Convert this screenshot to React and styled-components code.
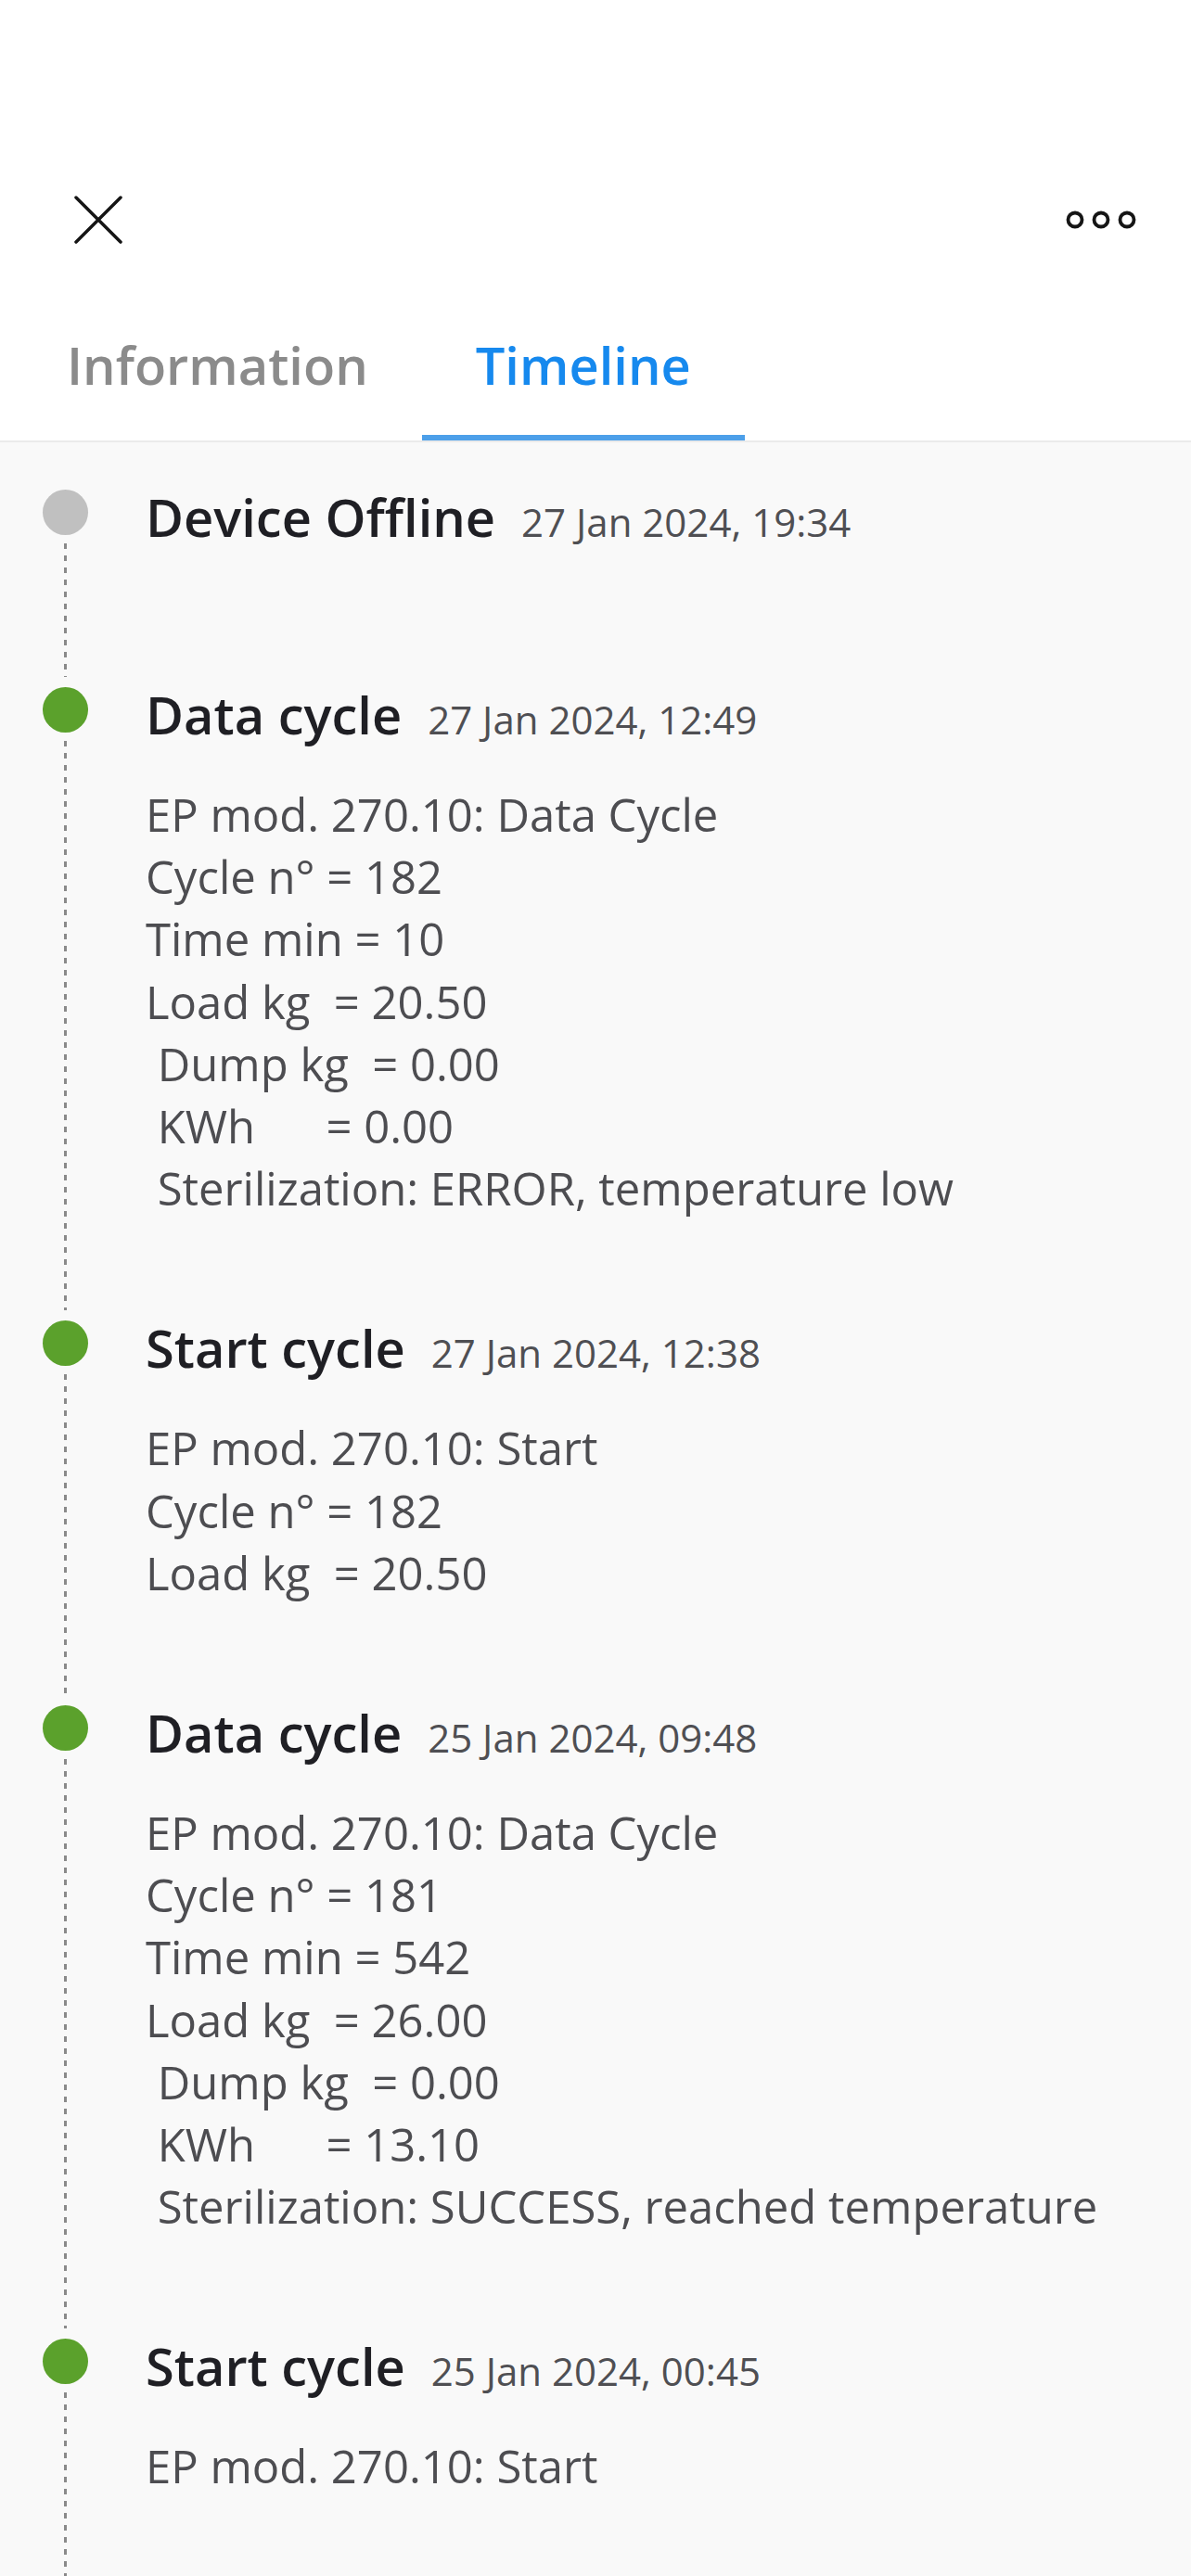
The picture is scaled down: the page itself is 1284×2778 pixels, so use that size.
import styled, { createGlobalStyle } from "styled-components";

const GlobalStyle = createGlobalStyle`
	html, body {
		margin: 0;
		padding: 0;
		background: #f9f9f9;
	}
	body {
		font-family: "Open Sans", "Noto Sans", sans-serif;
	}
`;

const Page = styled.div`
	height: 100vh;
	overflow: hidden;
	background: #f9f9f9;
`;

const Header = styled.header`
	background: #ffffff;
`;

const TopBar = styled.div`
	display: flex;
	justify-content: space-between;
	align-items: center;
	height: 74px;
	padding: 200px 59px 0 80px;
	color: #151515;
`;

const IconButton = styled.button`
	display: flex;
	align-items: center;
	justify-content: center;
	padding: 0;
	border: none;
	background: none;
	color: inherit;
`;

const Tabs = styled.nav`
	display: flex;
	margin-top: 79px;
	padding-left: 14px;
	border-bottom: 2px solid #ebebeb;
`;

const Tab = styled.div`
	padding: 0 58px 36px;
	font-size: 56px;
	line-height: 80px;
	font-weight: 600;
	color: ${(p) => (p.$active ? "#1689ee" : "#8b8b8b")};
	border-bottom: 6px solid ${(p) => (p.$active ? "#4c9fe9" : "transparent")};
`;

const Timeline = styled.section`
	padding: 40px 0 0 46px;
`;

const Item = styled.article`
	display: grid;
	grid-template-columns: 49px 1fr;
	column-gap: 62px;
`;

const Rail = styled.div`
	display: flex;
	flex-direction: column;
	align-items: center;
`;

const Dot = styled.span`
	width: 49px;
	height: 49px;
	margin-top: 11px;
	border-radius: 50%;
	background: ${(p) => p.$color};
	flex-shrink: 0;
`;

const DashLine = styled.span`
	flex: 1;
	width: 3px;
	margin-top: 9px;
	background: repeating-linear-gradient(to bottom, #8a8a8a 0 6px, transparent 6px 13px);
`;

const Content = styled.div`
	padding-bottom: 98px;
`;

const ItemHeader = styled.div`
	display: flex;
	align-items: baseline;
	gap: 28px;
	height: 80px;
	line-height: 80px;
	white-space: nowrap;
`;

const Title = styled.span`
	font-size: 56px;
	font-weight: 600;
	color: #1f1f24;
`;

const Stamp = styled.span`
	font-size: 42px;
	color: #4f4f53;
`;

const Body = styled.div`
	margin-top: 35px;
	font-size: 49px;
	line-height: 67.2px;
	color: #4d4d51;
	white-space: pre;
`;

const events = [
	{ title: "Device Offline", date: "27 Jan 2024, 19:34", color: "#c0c0c0", lines: [] },
	{
		title: "Data cycle",
		date: "27 Jan 2024, 12:49",
		color: "#5ba12c",
		lines: [
			"EP mod. 270.10: Data Cycle",
			"Cycle n° = 182",
			"Time min = 10",
			"Load kg  = 20.50",
			" Dump kg  = 0.00",
			" KWh      = 0.00",
			" Sterilization: ERROR, temperature low",
		],
	},
	{
		title: "Start cycle",
		date: "27 Jan 2024, 12:38",
		color: "#5ba12c",
		lines: ["EP mod. 270.10: Start", "Cycle n° = 182", "Load kg  = 20.50"],
	},
	{
		title: "Data cycle",
		date: "25 Jan 2024, 09:48",
		color: "#5ba12c",
		lines: [
			"EP mod. 270.10: Data Cycle",
			"Cycle n° = 181",
			"Time min = 542",
			"Load kg  = 26.00",
			" Dump kg  = 0.00",
			" KWh      = 13.10",
			" Sterilization: SUCCESS, reached temperature",
		],
	},
	{
		title: "Start cycle",
		date: "25 Jan 2024, 00:45",
		color: "#5ba12c",
		lines: ["EP mod. 270.10: Start"],
	},
];

const CloseIcon = () => (
	<svg width="52" height="52" viewBox="0 0 52 52" fill="none" stroke="currentColor" strokeWidth="3.5" strokeLinecap="round">
		<path d="M2 2 L50 50 M50 2 L2 50" />
	</svg>
);

const MoreIcon = () => (
	<svg width="76" height="22" viewBox="0 0 76 22" fill="none" stroke="currentColor" strokeWidth="3.8">
		<circle cx="10" cy="11" r="7.5" />
		<circle cx="38" cy="11" r="7.5" />
		<circle cx="66" cy="11" r="7.5" />
	</svg>
);

const App = () => {
	return (
		<Page>
			<GlobalStyle />
			<Header>
				<TopBar>
					<IconButton aria-label="Close">
						<CloseIcon />
					</IconButton>
					<IconButton aria-label="More">
						<MoreIcon />
					</IconButton>
				</TopBar>
				<Tabs>
					<Tab>Information</Tab>
					<Tab $active>Timeline</Tab>
				</Tabs>
			</Header>
			<Timeline>
				{events.map((ev, i) => (
					<Item key={`${i}-event`}>
						<Rail>
							<Dot $color={ev.color} />
							<DashLine />
						</Rail>
						<Content>
							<ItemHeader>
								<Title>{ev.title}</Title>
								<Stamp>{ev.date}</Stamp>
							</ItemHeader>
							<Body>{ev.lines.join("\n")}</Body>
						</Content>
					</Item>
				))}
			</Timeline>
		</Page>
	);
};

export default App;
